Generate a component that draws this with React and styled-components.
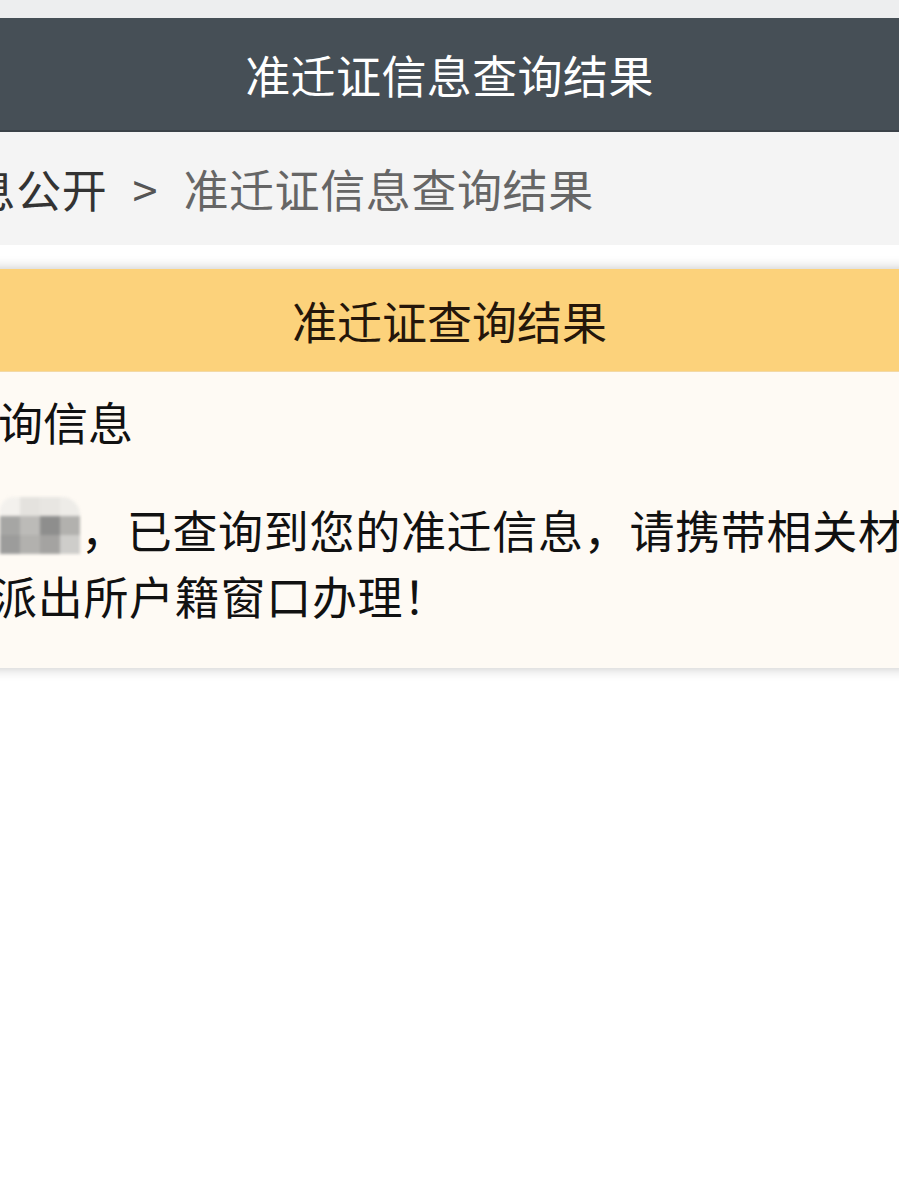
import React from 'react'
import styled, { createGlobalStyle } from 'styled-components'

const GlobalStyle = createGlobalStyle`
  html, body {
    margin: 0;
    padding: 0;
    background: #ffffff;
    overflow-x: hidden;
  }
  body {
    font-family: "Noto Sans CJK SC", "Noto Sans", sans-serif;
  }
`

// pixelated name, blurred like the screenshot
const mosaicCells = [
  '#f3f1ed', '#e4e2de', '#e8e6e2', '#eeece8',
  '#a6a6a4', '#bcbbb8', '#8e8e8d', '#b2b1ae',
  '#9c9c9b', '#b2b1ae', '#a4a3a1', '#cecdca',
]

function App() {
  return (
    <Page>
      <GlobalStyle />
      <TopStrip />
      <Header>
        <HeaderTitle>准迁证信息查询结果</HeaderTitle>
      </Header>

      <Breadcrumb>
        <Crumb>信息公开</Crumb>
        <Separator>&gt;</Separator>
        <Crumb $current>准迁证信息查询结果</Crumb>
      </Breadcrumb>

      <Card>
        <CardHead>准迁证查询结果</CardHead>
        <CardBody>
          <SectionLabel>查询信息</SectionLabel>
          <Message>
            <Line>
              <Mosaic>
                {mosaicCells.map((c, i) => (
                  <MosaicCell key={i} style={{ background: c }} />
                ))}
              </Mosaic>
              ，已查询到您的准迁信息，请携带相关材料
            </Line>
            <Line $shift={-8}>派出所户籍窗口办理！</Line>
          </Message>
        </CardBody>
      </Card>
    </Page>
  )
}
export default App

const Page = styled.div`
  width: 899px;
  min-height: 1187px;
  overflow: hidden;
  background: #ffffff;
`
const TopStrip = styled.div`
  height: 18px;
  background: #edeeef;
`
const Header = styled.header`
  height: 112px;
  background: #464f56;
  border-bottom: 2px solid #3b4248;
  display: flex;
  align-items: center;
  justify-content: center;
`
const HeaderTitle = styled.h1`
  margin: 0;
  font-size: 45px;
  font-weight: 400;
  color: #ffffff;
  line-height: 1;
  letter-spacing: 0.4px;
`
const Breadcrumb = styled.nav`
  height: 113px;
  background: #f4f4f4;
  display: flex;
  align-items: center;
  margin-left: -75px;
  white-space: nowrap;
  font-size: 45px;
`
const Crumb = styled.span`
  color: ${(p) => (p.$current ? '#666666' : '#333333')};
  letter-spacing: 0.6px;
`
const Separator = styled.span`
  color: #555555;
  margin: 0 26px 0 25px;
`
const Card = styled.section`
  margin: 24px -20px 0;
  background: #fefaf4;
  box-shadow: 0 0 12px rgba(0, 0, 0, 0.24);
`
const CardHead = styled.div`
  height: 102px;
  background: #fcd27b;
  border-bottom: 1px solid #f3d9a6;
  display: flex;
  align-items: center;
  justify-content: center;
  font-size: 45px;
  color: #24160a;
`
const CardBody = styled.div`
  padding: 20px 0 39px 20px;
  color: #111111;
  white-space: nowrap;
  overflow: hidden;
`
const SectionLabel = styled.div`
  font-size: 45px;
  line-height: 60px;
  margin-left: -47px;
`
const Message = styled.div`
  margin-top: 45px;
  font-size: 45px;
  line-height: 66px;
  letter-spacing: 0.7px;
`
const Line = styled.div`
  height: 66px;
  margin-left: ${(p) => p.$shift || 0}px;
`
const Mosaic = styled.span`
  display: inline-grid;
  grid-template-columns: repeat(4, 20px);
  grid-template-rows: repeat(3, 19px);
  width: 80px;
  height: 57px;
  margin-right: 1px;
  vertical-align: 33px;
  border-top-left-radius: 14px;
  border-top-right-radius: 18px;
  overflow: hidden;
  filter: blur(1.5px);
`
const MosaicCell = styled.span`
  display: block;
`
